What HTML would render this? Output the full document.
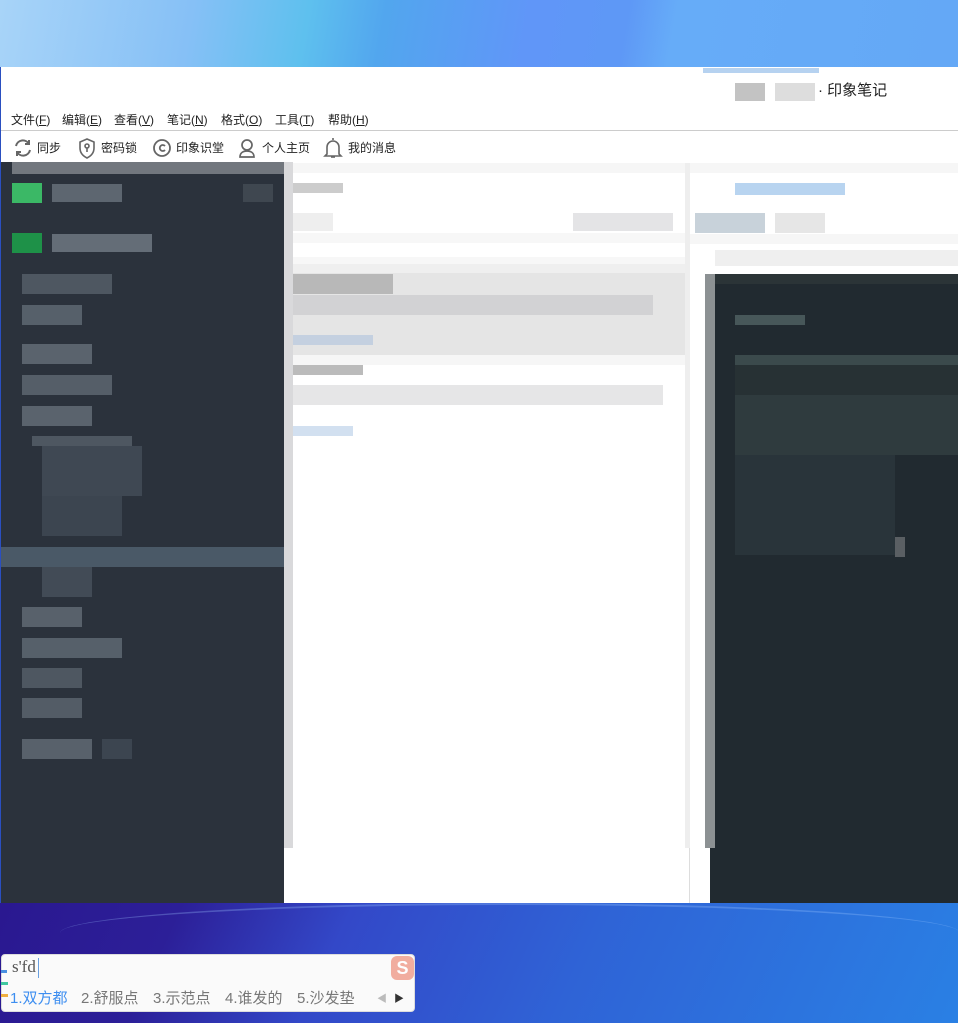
<!DOCTYPE html>
<html><head><meta charset="utf-8"><style>
*{margin:0;padding:0;box-sizing:border-box}
body{width:958px;height:1023px;overflow:hidden;position:relative;font-family:"Liberation Sans","Noto Sans CJK SC",sans-serif;background:#2a4fc0}
.a{position:absolute}
.top{left:0;top:0;width:958px;height:67px;background:linear-gradient(100deg,#a8d4f8 0%,#86c0f6 20%,#5ec0ee 32%,#52a6ee 40%,#6096f8 55%,#5e98f6 65%,#66acf8 70%,#64a8f6 100%)}
.bot{left:0;top:903px;width:958px;height:120px;background:linear-gradient(115deg,#2a1890 0%,#2c1f98 18%,#3348c8 35%,#2f63d6 60%,#2a80e4 100%)}
.win{left:1px;top:67px;width:957px;height:836px;background:#fff}
.menu span{position:absolute;top:111px;font-size:12px;color:#222}
.tb span{position:absolute;top:139px;font-size:12px;color:#222}
.g{position:absolute}
.c{position:absolute;top:987px;font-size:15px;color:#777;white-space:nowrap}
</style></head><body>
<div class="a top"></div>
<div class="a bot"></div>
<div class="a" style="left:60px;top:903px;width:900px;height:30px;border-top:2px solid rgba(160,200,255,.5);border-radius:50% 50% 0 0/30px 30px 0 0;opacity:.6"></div>
<div class="a win"></div>
<div class="a" style="left:703px;top:68px;width:116px;height:5px;background:#b6d2f0"></div>
<div class="g" style="left:735px;top:83px;width:30px;height:18px;background:#aaa;opacity:.7"></div>
<div class="g" style="left:775px;top:83px;width:40px;height:18px;background:#ddd"></div>
<div class="a" style="left:818px;top:79px;font-size:15px;color:#222">· 印象笔记</div>
<div class="menu">
<span style="left:11px">文件(<u>F</u>)</span><span style="left:62px">编辑(<u>E</u>)</span><span style="left:114px">查看(<u>V</u>)</span><span style="left:167px">笔记(<u>N</u>)</span><span style="left:221px">格式(<u>O</u>)</span><span style="left:275px">工具(<u>T</u>)</span><span style="left:328px">帮助(<u>H</u>)</span>
</div>
<div class="a" style="left:1px;top:130px;width:957px;height:1px;background:#ccc"></div>
<div class="tb">
<span style="left:37px">同步</span><span style="left:101px">密码锁</span><span style="left:176px">印象识堂</span><span style="left:262px">个人主页</span><span style="left:348px">我的消息</span>
</div>
<svg class="a" style="left:12px;top:137px" width="22" height="22" viewBox="0 0 22 22" fill="none" stroke="#666" stroke-width="2"><path d="M4 9a7 7 0 0 1 13-2M18 13a7 7 0 0 1-13 2"/><path d="M17 3v4h-4M5 19v-4h4"/></svg>
<svg class="a" style="left:77px;top:137px" width="20" height="22" viewBox="0 0 20 22" fill="none" stroke="#666" stroke-width="1.6"><path d="M10 2l7 3v6c0 5-3 8-7 10-4-2-7-5-7-10V5z"/><circle cx="10" cy="9" r="2"/><path d="M10 11v4"/></svg>
<svg class="a" style="left:151px;top:137px" width="22" height="22" viewBox="0 0 22 22" fill="none" stroke="#666" stroke-width="1.8"><circle cx="11" cy="11" r="8"/><path d="M14 9a3 3 0 1 0 0 4"/></svg>
<svg class="a" style="left:237px;top:137px" width="20" height="22" viewBox="0 0 20 22" fill="none" stroke="#666" stroke-width="1.7"><circle cx="10" cy="8" r="5"/><path d="M3 20c0-4 3-6 7-6s7 2 7 6z"/></svg>
<svg class="a" style="left:322px;top:136px" width="22" height="24" viewBox="0 0 22 24" fill="none" stroke="#666" stroke-width="1.6"><path d="M11 2v2M5 18V11a6 6 0 0 1 12 0v7l2 2H3z"/><path d="M9 21h4"/></svg>

<div class="a" style="left:1px;top:162px;width:283px;height:741px;background:#2b323c"></div>
<div class="a" style="left:12px;top:162px;width:272px;height:12px;background:#72777e"></div>
<div class="a" style="left:284px;top:162px;width:9px;height:686px;background:#d9d9db"></div>
<div class="g" style="left:12px;top:183px;width:30px;height:20px;background:#3bb866"></div>
<div class="g" style="left:52px;top:184px;width:70px;height:18px;background:#5d6670"></div>
<div class="g" style="left:243px;top:184px;width:30px;height:18px;background:#3f4750"></div>
<div class="g" style="left:12px;top:233px;width:30px;height:20px;background:#1e9148"></div>
<div class="g" style="left:52px;top:234px;width:100px;height:18px;background:#646d77"></div>
<div class="g" style="left:22px;top:274px;width:90px;height:20px;background:#4e5761"></div>
<div class="g" style="left:22px;top:305px;width:60px;height:20px;background:#56606a"></div>
<div class="g" style="left:22px;top:344px;width:70px;height:20px;background:#5a636d"></div>
<div class="g" style="left:22px;top:375px;width:90px;height:20px;background:#555e68"></div>
<div class="g" style="left:22px;top:406px;width:70px;height:20px;background:#5a636d"></div>
<div class="g" style="left:32px;top:436px;width:100px;height:10px;background:#4e5761"></div>
<div class="g" style="left:42px;top:446px;width:100px;height:50px;background:#3f4853"></div>
<div class="g" style="left:42px;top:496px;width:80px;height:40px;background:#3c4550"></div>
<div class="a" style="left:1px;top:547px;width:283px;height:20px;background:#4a5967"></div>
<div class="g" style="left:42px;top:567px;width:50px;height:30px;background:#424b56"></div>
<div class="g" style="left:22px;top:607px;width:60px;height:20px;background:#58616b"></div>
<div class="g" style="left:22px;top:638px;width:100px;height:20px;background:#56606a"></div>
<div class="g" style="left:22px;top:668px;width:60px;height:20px;background:#4e5761"></div>
<div class="g" style="left:22px;top:698px;width:60px;height:20px;background:#535c66"></div>
<div class="g" style="left:22px;top:739px;width:70px;height:20px;background:#58616b"></div>
<div class="g" style="left:102px;top:739px;width:30px;height:20px;background:#3c4550"></div>

<div class="a" style="left:293px;top:163px;width:392px;height:10px;background:#f6f6f6"></div>
<div class="g" style="left:293px;top:183px;width:50px;height:10px;background:#aaa;opacity:.6"></div>
<div class="g" style="left:293px;top:213px;width:40px;height:18px;background:#eee"></div>
<div class="g" style="left:573px;top:213px;width:100px;height:18px;background:#e4e4e6"></div>
<div class="a" style="left:293px;top:233px;width:392px;height:10px;background:#f7f7f7"></div>
<div class="a" style="left:293px;top:257px;width:392px;height:10px;background:#f7f7f7"></div>
<div class="a" style="left:293px;top:264px;width:392px;height:9px;background:#efefef"></div>
<div class="a" style="left:293px;top:273px;width:392px;height:82px;background:#e5e5e5"></div>
<div class="g" style="left:293px;top:274px;width:100px;height:20px;background:#b8b8b8"></div>
<div class="g" style="left:293px;top:295px;width:360px;height:20px;background:#d2d2d4"></div>
<div class="g" style="left:293px;top:335px;width:80px;height:10px;background:#c4d0e0"></div>
<div class="a" style="left:293px;top:355px;width:392px;height:10px;background:#f6f6f6"></div>
<div class="g" style="left:293px;top:365px;width:70px;height:10px;background:#aaa;opacity:.8"></div>
<div class="g" style="left:293px;top:385px;width:370px;height:20px;background:#e6e6e7"></div>
<div class="g" style="left:293px;top:426px;width:60px;height:10px;background:#d2e0f0"></div>
<div class="a" style="left:685px;top:163px;width:5px;height:685px;background:#eeeeee"></div>
<div class="a" style="left:689px;top:848px;width:1px;height:55px;background:#ddd"></div>

<div class="a" style="left:690px;top:163px;width:268px;height:10px;background:#f6f6f6"></div>
<div class="g" style="left:735px;top:183px;width:110px;height:12px;background:#b8d4f0"></div>
<div class="g" style="left:695px;top:213px;width:70px;height:20px;background:#c8d2da"></div>
<div class="g" style="left:775px;top:213px;width:50px;height:20px;background:#e6e6e6"></div>
<div class="a" style="left:690px;top:234px;width:268px;height:10px;background:#f6f6f6"></div>
<div class="g" style="left:715px;top:250px;width:243px;height:16px;background:#efefef"></div>
<div class="a" style="left:705px;top:274px;width:253px;height:574px;background:#212a30"></div>
<div class="a" style="left:710px;top:848px;width:248px;height:55px;background:#212a30"></div>
<div class="a" style="left:705px;top:274px;width:10px;height:574px;background:#8c9193"></div>
<div class="a" style="left:715px;top:274px;width:243px;height:10px;background:#2b3437"></div>
<div class="g" style="left:735px;top:315px;width:70px;height:10px;background:#475759"></div>
<div class="g" style="left:735px;top:355px;width:223px;height:10px;background:#3b4a4c"></div>
<div class="g" style="left:735px;top:365px;width:223px;height:30px;background:#273134"></div>
<div class="g" style="left:735px;top:395px;width:223px;height:60px;background:#2f3b3e"></div>
<div class="g" style="left:735px;top:455px;width:160px;height:100px;background:#29343a"></div>
<div class="g" style="left:895px;top:537px;width:10px;height:20px;background:#5a5f63"></div>

<div class="a" style="left:1px;top:954px;width:414px;height:58px;background:#fafafa;border-radius:4px;border:1px solid #ddd"></div>
<div class="a" style="left:12px;top:957px;font-family:'Liberation Serif',serif;font-size:17px;color:#555">s'fd</div>
<div class="a" style="left:38px;top:958px;width:1px;height:20px;background:#6aa0e0"></div>
<div class="a" style="left:391px;top:956px;width:23px;height:24px;background:#f0a090;border-radius:6px;color:#fff;font-weight:bold;font-size:18px;text-align:center;line-height:24px;opacity:.85">S</div>
<div class="a" style="left:1px;top:970px;width:6px;height:3px;background:#4a90e0"></div>
<div class="a" style="left:1px;top:982px;width:7px;height:3px;background:#40c8a0"></div>
<div class="a" style="left:1px;top:994px;width:7px;height:3px;background:#f0b040"></div>
<div class="c" style="left:10px;color:#3d8ef0">1.双方都</div>
<div class="c" style="left:81px">2.舒服点</div>
<div class="c" style="left:153px">3.示范点</div>
<div class="c" style="left:225px">4.谁发的</div>
<div class="c" style="left:297px">5.沙发垫</div>
<div class="a" style="left:377px;top:990px;font-size:10px;color:#bbb">◀</div>
<div class="a" style="left:394px;top:990px;font-size:10px;color:#333">▶</div>
</body></html>
